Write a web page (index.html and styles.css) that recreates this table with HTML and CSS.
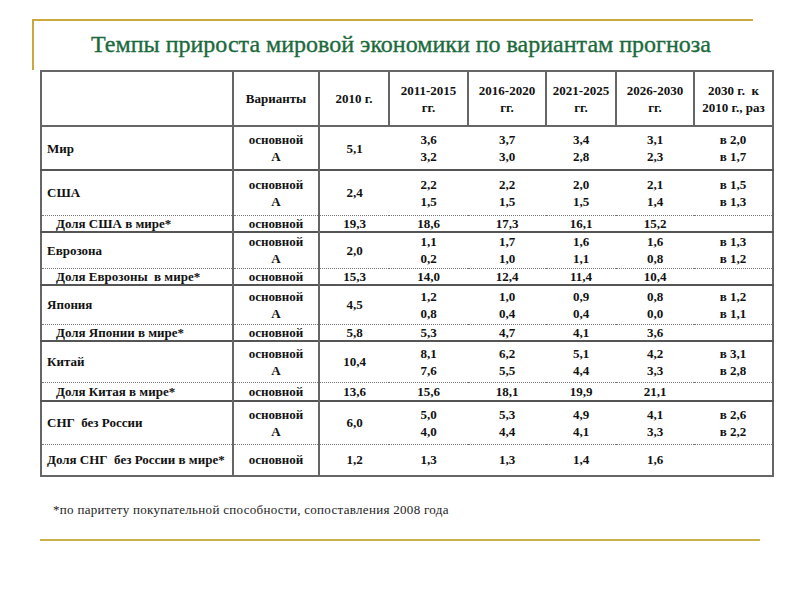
FILE: index.html
```html
<!DOCTYPE html>
<html lang="ru">
<head>
<meta charset="utf-8">
<title>Темпы прироста мировой экономики</title>
<link rel="stylesheet" href="styles.css">
</head>
<body>
<div class="sheet">
  <div class="frame">
    <p class="heading">Темпы прироста мировой экономики по вариантам прогноза</p>
  </div>
  <table class="grid">
    <colgroup>
      <col class="w-name"><col class="w-var"><col class="w-2010"><col class="w-p1"><col class="w-p2"><col class="w-p3"><col class="w-p4"><col class="w-ratio">
    </colgroup>
    <thead>
      <tr class="head">
        <th></th>
        <th>Варианты</th>
        <th>2010 г.</th>
        <th>2011-2015<br>гг.</th>
        <th>2016-2020<br>гг.</th>
        <th>2021-2025<br>гг.</th>
        <th>2026-2030<br>гг.</th>
        <th>2030 г.&nbsp; к<br>2010 г., раз</th>
      </tr>
    </thead>
    <tbody>
      <tr class="main r44">
        <td class="name">Мир</td><td class="var">основной<br>А</td><td>5,1</td>
        <td>3,6<br>3,2</td><td>3,7<br>3,0</td><td>3,4<br>2,8</td><td>3,1<br>2,3</td><td>в 2,0<br>в 1,7</td>
      </tr>
      <tr class="main r45">
        <td class="name">США</td><td class="var">основной<br>А</td><td>2,4</td>
        <td>2,2<br>1,5</td><td>2,2<br>1,5</td><td>2,0<br>1,5</td><td>2,1<br>1,4</td><td>в 1,5<br>в 1,3</td>
      </tr>
      <tr class="share r17">
        <td class="name indent">Доля США в мире*</td><td class="var">основной</td><td>19,3</td>
        <td>18,6</td><td>17,3</td><td>16,1</td><td>15,2</td><td></td>
      </tr>
      <tr class="main r36">
        <td class="name">Еврозона</td><td class="var">основной<br>А</td><td>2,0</td>
        <td>1,1<br>0,2</td><td>1,7<br>1,0</td><td>1,6<br>1,1</td><td>1,6<br>0,8</td><td>в 1,3<br>в 1,2</td>
      </tr>
      <tr class="share r17">
        <td class="name indent">Доля Еврозоны&nbsp; в мире*</td><td class="var">основной</td><td>15,3</td>
        <td>14,0</td><td>12,4</td><td>11,4</td><td>10,4</td><td></td>
      </tr>
      <tr class="main r39">
        <td class="name">Япония</td><td class="var">основной<br>А</td><td>4,5</td>
        <td>1,2<br>0,8</td><td>1,0<br>0,4</td><td>0,9<br>0,4</td><td>0,8<br>0,0</td><td>в 1,2<br>в 1,1</td>
      </tr>
      <tr class="share r17">
        <td class="name indent">Доля Японии в мире*</td><td class="var">основной</td><td>5,8</td>
        <td>5,3</td><td>4,7</td><td>4,1</td><td>3,6</td><td></td>
      </tr>
      <tr class="main r41">
        <td class="name">Китай</td><td class="var">основной<br>А</td><td>10,4</td>
        <td>8,1<br>7,6</td><td>6,2<br>5,5</td><td>5,1<br>4,4</td><td>4,2<br>3,3</td><td>в 3,1<br>в 2,8</td>
      </tr>
      <tr class="share r19">
        <td class="name indent">Доля Китая в мире*</td><td class="var">основной</td><td>13,6</td>
        <td>15,6</td><td>18,1</td><td>19,9</td><td>21,1</td><td></td>
      </tr>
      <tr class="main r43">
        <td class="name">СНГ&nbsp; без России</td><td class="var">основной<br>А</td><td>6,0</td>
        <td>5,0<br>4,0</td><td>5,3<br>4,4</td><td>4,9<br>4,1</td><td>4,1<br>3,3</td><td>в 2,6<br>в 2,2</td>
      </tr>
      <tr class="share r32">
        <td class="name">Доля СНГ&nbsp; без России в мире*</td><td class="var">основной</td><td>1,2</td>
        <td>1,3</td><td>1,3</td><td>1,4</td><td>1,6</td><td></td>
      </tr>
    </tbody>
  </table>
  <p class="foot">*по паритету покупательной способности, сопоставления 2008 года</p>
  <div class="goldline"></div>
</div>
</body>
</html>
```

FILE: styles.css
```css
body {
  margin: 0;
  padding: 0;
  background: #ffffff;
}

.sheet {
  width: 800px;
  height: 600px;
  padding-top: 19px;
  box-sizing: border-box;
  font-family: "Liberation Serif", serif;
  color: #111111;
}

.frame {
  margin-left: 32px;
  width: 721px;
  height: 51px;
  border-top: 2px solid #c9a83e;
  border-left: 2px solid #c9a83e;
  padding-left: 15px;
  box-sizing: border-box;
  display: flex;
  align-items: center;
  justify-content: center;
}

.heading {
  margin: 0;
  padding-bottom: 2px;
  font-size: 24px;
  color: #1b6a3c;
  -webkit-text-stroke: 0.35px #1b6a3c;
  white-space: nowrap;
}

.grid {
  margin-left: 40px;
  width: 732px;
  border-collapse: collapse;
  table-layout: fixed;
  border: 2px solid #666666;
  font-size: 13px;
  font-weight: bold;
  line-height: 17px;
}

.w-name { width: 192px; }
.w-var { width: 86px; }
.w-2010 { width: 70px; }
.w-p1 { width: 79px; }
.w-p2 { width: 78px; }
.w-p3 { width: 70px; }
.w-p4 { width: 78px; }
.w-ratio { width: 79px; }

.grid th,
.grid td {
  padding: 0;
  text-align: center;
  vertical-align: middle;
}

.head { height: 55px; }

.head th {
  border: 2px solid #666666;
  font-weight: bold;
}

.grid td.name {
  text-align: left;
  padding-left: 5px;
  border-right: 2px solid #666666;
  white-space: nowrap;
}

.grid td.name.indent {
  padding-left: 14px;
}

.grid td.var {
  border-right: 2px solid #666666;
}

.main td { border-top: 2px solid #555555; }
.share td { border-top: 1px dotted #777777; line-height: 15px; }

.r17 { height: 17px; }
.r19 { height: 19px; }
.r32 { height: 32px; }
.r36 { height: 36px; }
.r39 { height: 39px; }
.r41 { height: 41px; }
.r43 { height: 43px; }
.r44 { height: 44px; }
.r45 { height: 45px; }

.foot {
  margin: 25px 0 0 53px;
  font-size: 13px;
  line-height: 16px;
  letter-spacing: 0.3px;
  color: #222222;
}

.goldline {
  margin: 21px 0 0 40px;
  width: 720px;
  height: 2px;
  background: #c9b24e;
}
```
